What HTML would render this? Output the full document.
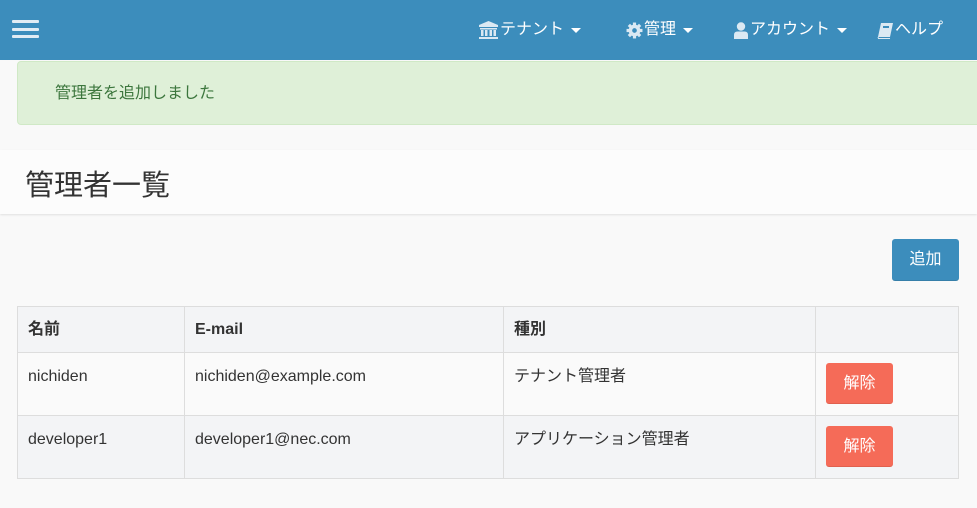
<!DOCTYPE html>
<html><head><meta charset="utf-8"><style>
*{box-sizing:border-box;margin:0;padding:0}
body{width:977px;height:508px;overflow:hidden;background:#f9f9f9;font-family:"Liberation Sans","Noto Sans CJK JP",sans-serif;color:#333;position:relative}
.nav{position:absolute;left:0;top:0;width:977px;height:60px;background:#3c8dbc}
.bar{position:absolute;left:12px;width:27px;height:3px;background:#e1ecf4;border-radius:1px}
.ni{position:absolute;top:19px;color:#fff;font-size:16px;line-height:22px;white-space:nowrap;display:flex;align-items:center}
.ni svg{margin-right:1px}
.caret{display:inline-block;width:0;height:0;border-left:5px solid transparent;border-right:5px solid transparent;border-top:5px solid #fff;margin-left:7px}
.alert{position:absolute;left:17px;top:61px;width:975px;height:64px;background:#dff0d8;border:1px solid #d0e9c6;border-radius:4px;color:#3c763d;font-size:16px;line-height:22px;padding:21px 0 0 37px}
.hdr{position:absolute;left:0;top:150px;width:977px;height:64px;background:#fcfcfc;box-shadow:0 1px 2px rgba(0,0,0,.1)}
.hdr h1{font-weight:normal;font-size:29px;position:absolute;left:25px;top:18px;line-height:36px;color:#333}
.btn{position:absolute;color:#fff;font-size:16px;text-align:center;border-radius:3px}
table{position:absolute;left:17px;top:306px;width:942px;border-collapse:collapse;font-size:16px;line-height:22px}
td,th{border:1px solid #ddd;text-align:left;vertical-align:top;padding:13px 10px 11px;line-height:22px}
th{height:46px;padding:12px 10px 10px;background:#f3f4f6;font-weight:bold}
tr.r1 td{height:63px;background:#fafafa}
tr.r2 td{height:63px;background:#f3f4f6}
.del{width:67px;height:41px;line-height:41px;background:#f56b58;color:#fff;border-radius:3px;text-align:center;border-bottom:1px solid #e0604e}
</style></head><body>
<div class="nav">
<div class="bar" style="top:20px"></div><div class="bar" style="top:28px"></div><div class="bar" style="top:35px"></div>
<div class="ni" style="left:478px"><svg width="21" height="18" viewBox="0 0 21 18"><path d="M10.5 0L20 4V6H1V4Z" fill="#dbe9f3"/><rect x="2" y="7" width="17" height="1.5" fill="#dbe9f3"/><rect x="3" y="9" width="2.5" height="6" fill="#dbe9f3"/><rect x="7" y="9" width="2.5" height="6" fill="#dbe9f3"/><rect x="11.5" y="9" width="2.5" height="6" fill="#dbe9f3"/><rect x="15.5" y="9" width="2.5" height="6" fill="#dbe9f3"/><rect x="1" y="16" width="19" height="2" fill="#dbe9f3"/></svg>テナント<span class="caret"></span></div>
<div class="ni" style="left:626px"><svg width="17" height="17" viewBox="0 0 16 16"><g fill="#dbe9f3"><circle cx="8" cy="8" r="5.5"/><rect x="6.5" y="0.5" width="3" height="15"/><rect x="0.5" y="6.5" width="15" height="3"/><rect x="6.5" y="0.5" width="3" height="15" transform="rotate(45 8 8)"/><rect x="6.5" y="0.5" width="3" height="15" transform="rotate(-45 8 8)"/></g><circle cx="8" cy="8" r="2.2" fill="#3c8dbc"/></svg>管理<span class="caret"></span></div>
<div class="ni" style="left:733px"><svg width="16" height="17" viewBox="0 0 16 17"><g fill="#dbe9f3"><circle cx="8" cy="4.5" r="4.2"/><path d="M1 17V13Q1 9.5 4.5 9.5H11.5Q15 9.5 15 13V17Z"/></g></svg>アカウント<span class="caret"></span></div>
<div class="ni" style="left:877px"><svg width="17" height="17" viewBox="0 0 17 17"><path d="M4 1H16L13 15H1Z" fill="#dbe9f3"/><rect x="6" y="4" width="6" height="2" fill="#3c8dbc"/><path d="M1 15L1.5 16.5H13" stroke="#dbe9f3" fill="none"/></svg>ヘルプ</div>
</div>
<div class="alert">管理者を追加しました</div>
<div class="hdr"><h1>管理者一覧</h1></div>
<div class="btn" style="left:892px;top:239px;width:67px;height:42px;line-height:42px;background:#3c8dbc;border-bottom:1px solid #367fa9">追加</div>
<table>
<tr><th style="width:167px">名前</th><th style="width:319px">E-mail</th><th style="width:312px">種別</th><th></th></tr>
<tr class="r1"><td>nichiden</td><td>nichiden@example.com</td><td>テナント管理者</td><td style="padding:10px"><div class="del">解除</div></td></tr>
<tr class="r2"><td>developer1</td><td>developer1@nec.com</td><td>アプリケーション管理者</td><td style="padding:10px"><div class="del">解除</div></td></tr>
</table>
</body></html>
